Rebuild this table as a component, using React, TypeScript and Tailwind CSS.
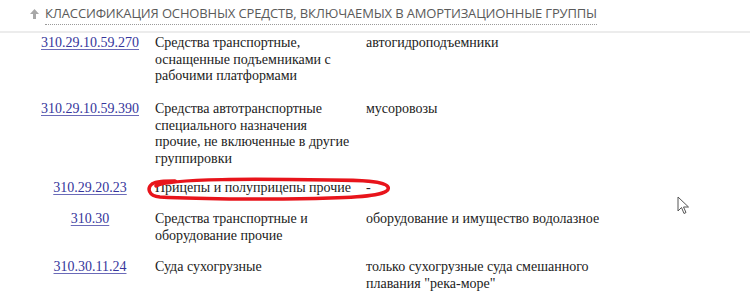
import React from 'react';

type Row = {
    code: string;
    name: string[];
    note: string[];
    pad: string;
};

const ROWS: Row[] = [
    {
        code: '310.29.10.59.270',
        name: ['Средства транспортные,', 'оснащенные подъемниками с', 'рабочими платформами'],
        note: ['автогидроподъемники'],
        pad: 'pb-[16.5px]',
    },
    {
        code: '310.29.10.59.390',
        name: ['Средства автотранспортные', 'специального назначения', 'прочие, не включенные в другие', 'группировки'],
        note: ['мусоровозы'],
        pad: 'pb-[13px]',
    },
    {
        code: '310.29.20.23',
        name: ['Прицепы и полуприцепы прочие'],
        note: ['-'],
        pad: 'pb-[14.5px]',
    },
    {
        code: '310.30',
        name: ['Средства транспортные и', 'оборудование прочие'],
        note: ['оборудование и имущество водолазное'],
        pad: 'pb-[15px]',
    },
    {
        code: '310.30.11.24',
        name: ['Суда сухогрузные'],
        note: ['только сухогрузные суда смешанного', 'плавания "река-море"'],
        pad: 'pb-[14px]',
    },
    {
        code: '310.30.12.12',
        name: [],
        note: [],
        pad: 'pb-[14px]',
    },
];

const Lines: React.FC<{ lines: string[] }> = ({ lines }) => (
    <>
        {lines.map((l, i) => (
            <div key={i} className="whitespace-nowrap">{l}</div>
        ))}
    </>
);

const App: React.FC = () => {
    return (
        <div className="relative w-[750px] h-[307px] overflow-hidden bg-white">
            {/* header */}
            <div className="h-[33px] flex items-start pl-[30px] pt-[5px] border-b-2 border-[#ececec]">
                <svg width="9" height="10" viewBox="0 0 9 10" className="mt-[4px] mr-[6px]">
                    <path d="M4.5 0 L9 5 L6 5 L6 10 L3 10 L3 5 L0 5 Z" fill="#a8a8a8" />
                </svg>
                <div
                    className="text-[13px] leading-[16px] text-[#5a5a5a] tracking-[-0.15px] pb-[3px] border-b border-dotted border-[#9a9a9a]"
                    style={{ fontFamily: '"Open Sans", sans-serif' }}
                >
                    КЛАССИФИКАЦИЯ ОСНОВНЫХ СРЕДСТВ, ВКЛЮЧАЕМЫХ В АМОРТИЗАЦИОННЫЕ ГРУППЫ
                </div>
            </div>

            {/* table */}
            <div
                className="pt-[2px] text-[14px] leading-[16.5px] text-[#222]"
                style={{ fontFamily: '"Liberation Serif", "Times New Roman", serif' }}
            >
                {ROWS.map(r => (
                    <div key={r.code} className={`flex ${r.pad}`}>
                        <div className="w-[120px] ml-[30px] text-center">
                            <a href="#" className="text-[#36369c] underline underline-offset-2 decoration-[#6a6ab8]">
                                {r.code}
                            </a>
                        </div>
                        <div className="w-[206px] ml-[5px]">
                            <Lines lines={r.name} />
                        </div>
                        <div className="w-[260px] ml-[5px]">
                            <Lines lines={r.note} />
                        </div>
                    </div>
                ))}
            </div>

            {/* red hand-drawn mark */}
            <svg className="absolute left-0 top-0 pointer-events-none" width="750" height="307">
                <path
                    d="M156 186 C 170 178, 260 179, 330 180 C 360 180, 385 181, 388 187 C 391 194, 370 197, 330 198 C 280 200, 200 199, 160 197 C 148 196, 147 188, 152 184 C 156 181, 165 181, 175 181"
                    fill="none"
                    stroke="#e8141b"
                    strokeWidth="3.5"
                    strokeLinecap="round"
                />
            </svg>

            {/* mouse cursor */}
            <svg className="absolute left-[677px] top-[196px]" width="14" height="20" viewBox="0 0 14 20">
                <path d="M1 1 L1 15 L4.5 11.5 L7 17.5 L9 16.5 L6.5 11 L11.5 11 Z" fill="#fff" stroke="#555" strokeWidth="1" strokeLinejoin="round" />
            </svg>
        </div>
    );
};

export default App;
